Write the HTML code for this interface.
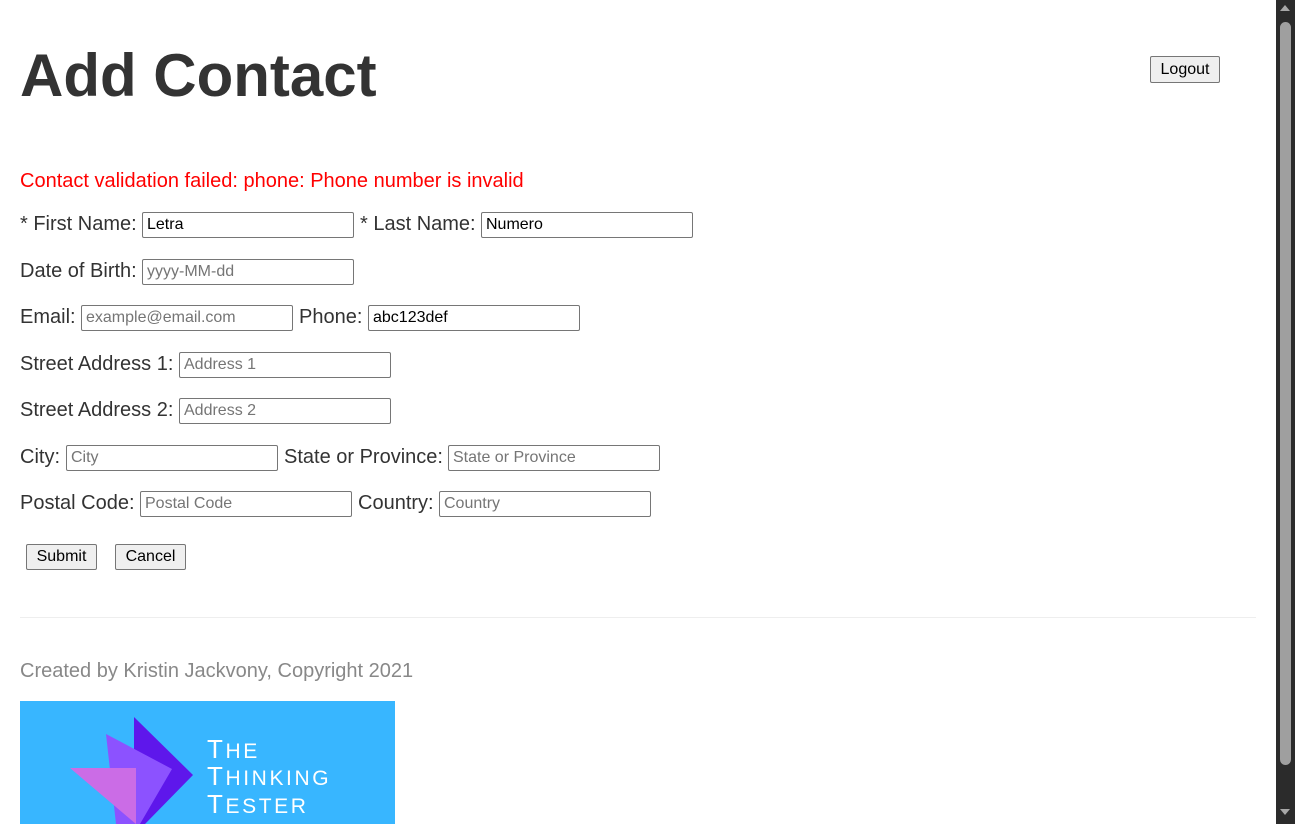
<!DOCTYPE html>
<html><head><meta charset="utf-8"><style>
html,body{margin:0;padding:0;width:1295px;height:824px;overflow:hidden;background:#fff;font-family:"Liberation Sans",Arial,sans-serif;color:#333}
.a{position:absolute;white-space:nowrap;line-height:normal}
.l{font-size:20px}
input{position:absolute;box-sizing:border-box;height:26px;width:212px;border:1px solid #767676;border-radius:2px;padding:1px 4px;font:16px "Liberation Sans",Arial,sans-serif;color:#000;background:#fff;margin:0}
input::placeholder{color:#757575}
button{position:absolute;box-sizing:border-box;height:26px;border:1px solid #767676;border-radius:2px;background:#efefef;font:16px "Liberation Sans",Arial,sans-serif;color:#000;padding:0;margin:0}
</style></head><body>
<div class="a" style="left:20px;top:41px;font-size:60px;font-weight:bold;color:#333">Add Contact</div>
<button style="left:1150px;top:56px;width:70px;height:27px">Logout</button>
<div class="a l" style="left:20px;top:170px;color:#f00">Contact validation failed: phone: Phone number is invalid</div>

<div class="a l" style="left:20px;top:213px">* First Name:</div>
<input style="left:142px;top:212px" value="Letra">
<div class="a l" style="left:360px;top:213px">* Last Name:</div>
<input style="left:481px;top:212px" value="Numero">

<div class="a l" style="left:20px;top:260px">Date of Birth:</div>
<input style="left:142px;top:259px" placeholder="yyyy-MM-dd">

<div class="a l" style="left:20px;top:306px">Email:</div>
<input style="left:81px;top:305px" placeholder="example@email.com">
<div class="a l" style="left:299px;top:306px">Phone:</div>
<input style="left:368px;top:305px" value="abc123def">

<div class="a l" style="left:20px;top:353px">Street Address 1:</div>
<input style="left:179px;top:352px" placeholder="Address 1">

<div class="a l" style="left:20px;top:399px">Street Address 2:</div>
<input style="left:179px;top:398px" placeholder="Address 2">

<div class="a l" style="left:20px;top:446px">City:</div>
<input style="left:66px;top:445px" placeholder="City">
<div class="a l" style="left:284px;top:446px">State or Province:</div>
<input style="left:448px;top:445px" placeholder="State or Province">

<div class="a l" style="left:20px;top:492px">Postal Code:</div>
<input style="left:140px;top:491px" placeholder="Postal Code">
<div class="a l" style="left:358px;top:492px">Country:</div>
<input style="left:439px;top:491px" placeholder="Country">

<button style="left:26px;top:544px;width:71px">Submit</button>
<button style="left:115px;top:544px;width:71px">Cancel</button>

<div style="position:absolute;left:20px;top:617px;width:1236px;height:1px;background:#eee"></div>
<div class="a l" style="left:20px;top:660px;color:#888">Created by Kristin Jackvony, Copyright 2021</div>

<svg style="position:absolute;left:20px;top:701px" width="375" height="123" viewBox="0 0 375 123">
<rect width="375" height="123" fill="#38b6ff"/>
<polygon points="114,16 173,74 125,123 114,123" fill="#5e17eb"/>
<polygon points="86,33 152,68 120,123 96,123" fill="#8c52ff"/>
<polygon points="50,67 116,67 116,123" fill="#cb6ce6"/>
<g fill="#fff" font-family="Liberation Sans,sans-serif" font-size="26" letter-spacing="2.6">
<text x="187" y="57">T<tspan font-size="21">HE</tspan></text>
<text x="187" y="84">T<tspan font-size="21">HINKING</tspan></text>
<text x="187" y="112">T<tspan font-size="21">ESTER</tspan></text>
</g>
</svg>

<div style="position:absolute;left:1276px;top:0;width:19px;height:824px;background:#2b2b2b"></div>
<div style="position:absolute;left:1280px;top:22px;width:11px;height:743px;background:#9f9f9f;border-radius:6px"></div>
<div style="position:absolute;left:1280px;top:5px;width:0;height:0;border-left:5px solid transparent;border-right:5px solid transparent;border-bottom:6px solid #a8a8a8"></div>
<div style="position:absolute;left:1280px;top:809px;width:0;height:0;border-left:5px solid transparent;border-right:5px solid transparent;border-top:6px solid #a8a8a8"></div>
</body></html>
